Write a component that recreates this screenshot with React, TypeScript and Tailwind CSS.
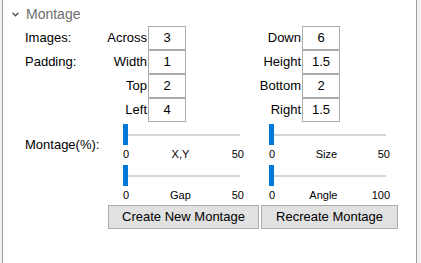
import React from 'react';

const font = 'font-["Liberation_Sans",Arial,sans-serif]';

function Box({ value }: { value: string }) {
  return (
    <div className="w-[38px] h-[24px] border border-[#acacac] bg-white flex items-center justify-center text-[13px] text-black">
      {value}
    </div>
  );
}

function Row({ label, a, av, b, bv }: { label: string; a: string; av: string; b: string; bv: string }) {
  return (
    <div className="flex items-center h-[24px] text-[13px] text-black">
      <div className="w-[81px]">{label}</div>
      <div className="w-[42px] text-right pr-[1px]">{a}</div>
      <Box value={av} />
      <div className="w-[116px] text-right pr-[1px]">{b}</div>
      <Box value={bv} />
    </div>
  );
}

function Slider({ label, max }: { label: string; max: string }) {
  return (
    <div className="w-[121px]">
      <div className="flex items-center h-[21px]">
        <div className="w-[5px] h-[21px] bg-[#0078d7]" />
        <div className="w-[112px] h-[2px] bg-[#d6d6d6]" />
      </div>
      <div className="flex justify-between h-[20px] leading-[18px] text-[11px] text-black">
        <span>0</span>
        <span>{label}</span>
        <span>{max}</span>
      </div>
    </div>
  );
}

export default function App() {
  return (
    <div className={`w-[421px] h-[263px] bg-[#f0f0f0] pl-[2px] ${font}`}>
      <div className="w-[415px] h-[263px] bg-white border-l border-r border-[#a0a0a0]">
        <div className="pt-[2px] h-[26px]">
          <div className="flex items-center h-[24px] pl-[9px]">
            <svg width="7" height="5" viewBox="0 0 7 5" className="mr-[7px]">
              <path d="M0.5 0.8 L3.5 3.8 L6.5 0.8" fill="none" stroke="#505050" strokeWidth="1.3" />
            </svg>
            <span className="text-[14px] text-[#6d6d6d]">Montage</span>
          </div>
        </div>
        <div className="pl-[22px]">
          <Row label="Images:" a="Across" av="3" b="Down" bv="6" />
          <Row label="Padding:" a="Width" av="1" b="Height" bv="1.5" />
          <Row label="" a="Top" av="2" b="Bottom" bv="2" />
          <Row label="" a="Left" av="4" b="Right" bv="1.5" />
          <div className="flex mt-[2px]">
            <div className="w-[98px] pt-[11px] text-[13px] text-black">Montage(%):</div>
            <div className="grid grid-cols-[121px_121px] gap-x-[25px]">
              <Slider label="X,Y" max="50" />
              <Slider label="Size" max="50" />
              <Slider label="Gap" max="50" />
              <Slider label="Angle" max="100" />
            </div>
          </div>
          <div className="flex gap-[2px] pl-[83px] -mt-[1px]">
            <button className="w-[151px] h-[24px] bg-[#e1e1e1] border border-[#adadad] text-[13px] text-black">
              Create New Montage
            </button>
            <button className="w-[137px] h-[24px] bg-[#e1e1e1] border border-[#adadad] text-[13px] text-black">
              Recreate Montage
            </button>
          </div>
        </div>
      </div>
    </div>
  );
}
